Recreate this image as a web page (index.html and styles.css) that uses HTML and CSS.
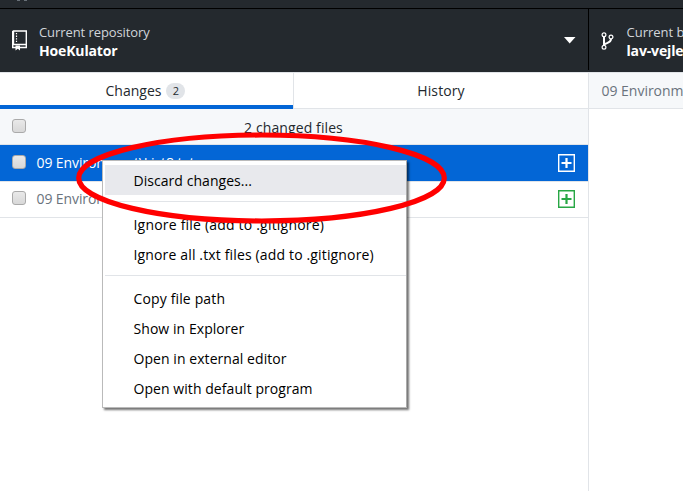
FILE: index.html
```html
<!DOCTYPE html>
<html lang="en">
<head>
<meta charset="utf-8">
<title>HoeKulator</title>
<link rel="stylesheet" href="styles.css">
</head>
<body>
<div class="titlebar"><i></i><i></i></div>
<header class="toolbar">
  <div class="repo">
    <svg class="repo-icon" width="16" height="21" viewBox="0 0 16 21"><path d="M.7 1h13.600v16.500H8M4 17.500H.7V1M.7 14.500h13.600" fill="none" stroke="#fff" stroke-width="1.400"/><path d="M1.500 1v13" stroke="#fff" stroke-width="1.400"/><path d="M4.500 3v9" stroke="#fff" stroke-width="1.200" stroke-dasharray="1.300 1.300"/><path d="M3.500 15.500h4.500v5l-2.200-1.800-2.300 1.800z" fill="#fff"/></svg>
    <div class="label"><span class="desc s-repo">Current repository</span><b>HoeKulator</b></div>
    <svg class="caret" width="12" height="7" viewBox="0 0 12 7"><path d="M0 0h11.500L5.700 6.500z" fill="#fff"/></svg>
  </div>
  <div class="branch">
    <svg class="branch-icon" width="14" height="18" viewBox="0 0 14 18"><g fill="none" stroke="#fff"><circle cx="3" cy="2.700" r="1.900" stroke-width="1.200"/><circle cx="10" cy="5" r="1.900" stroke-width="1.200"/><circle cx="3" cy="15.200" r="1.900" stroke-width="1.200"/><path d="M3 4.600v8.700M10 7c0 4-4 3.500-7 5.500" stroke-width="2"/></g></svg>
    <div class="label"><span class="desc">Current b</span><b>lav-vejle</b></div>
  </div>
</header>
<main>
  <section class="sidebar">
    <nav class="tabs">
      <div class="tab active"><span>Changes</span><span class="count">2</span></div>
      <div class="tab"><span class="s-history">History</span></div>
    </nav>
    <div class="row heading"><span class="check"></span><span class="total">2 changed files</span></div>
    <div class="row selected"><span class="check"></span><span class="file">09 Environment\List8.txt</span>
      <svg class="plus" width="17" height="18" viewBox="0 0 17 18"><path d="M.7.7h15.600v16.600H.7z" fill="none" stroke="currentColor" stroke-width="1.400"/><path d="M8.500 4v10M3.500 9h10" stroke="currentColor" stroke-width="2.200"/></svg></div>
    <div class="row last"><span class="check"></span><span class="file">09 Environment\test.txt</span>
      <svg class="plus" width="17" height="18" viewBox="0 0 17 18"><path d="M.7.7h15.600v16.600H.7z" fill="none" stroke="currentColor" stroke-width="1.400"/><path d="M8.500 4v10M3.500 9h10" stroke="currentColor" stroke-width="2.200"/></svg></div>
  </section>
  <section class="diff"><div class="path">09 Environm</div></section>
</main>
<div class="menu">
  <div class="item hover"><span class="m1">Discard changes...</span></div>
  <hr>
  <div class="item"><span class="m2">Ignore file (add to .gitignore)</span></div>
  <div class="item"><span class="m3">Ignore all .txt files (add to .gitignore)</span></div>
  <hr>
  <div class="item"><span class="m4">Copy file path</span></div>
  <div class="item"><span class="m5">Show in Explorer</span></div>
  <div class="item"><span class="m5">Open in external editor</span></div>
  <div class="item"><span class="m5">Open with default program</span></div>
</div>
<svg class="mark" width="372" height="94" viewBox="0 0 372 94"><ellipse cx="186.500" cy="47" rx="182.800" ry="43" fill="none" stroke="#f00" stroke-width="5.200"/></svg>
</body>
</html>
```

FILE: styles.css
```css
* { box-sizing: border-box; }
body { margin: 0; width: 683px; height: 491px; overflow: hidden; position: relative; background: #fff; color: #24292e; font: 14px/20px "Open Sans", "Noto Sans", sans-serif; white-space: nowrap; display: flex; flex-direction: column; }
.titlebar { height: 9px; background: #24292e; border-bottom: 1px solid #000; display: flex; gap: 4px; padding-left: 17px; flex: none; }
.titlebar i { width: 3px; height: 1px; background: #687078; }
.toolbar { height: 63px; background: #24292e; display: flex; flex: none; color: #fff; }
.repo { width: 589px; flex: none; display: flex; align-items: flex-start; border-right: 1px solid #000; padding: 14px 12px 0 12px; height: 61px; }
.repo-icon { margin-top: 7px; }
.label { display: flex; flex-direction: column; line-height: 18px; margin-left: 11px; }
.desc { color: #d1d5da; font-size: 13px; }
.s-repo { letter-spacing: -.08px; }
.label b { font-size: 14px; letter-spacing: -.15px; position: relative; top: 1px; }
.caret { margin: 14px 0 0 auto; }
.branch { flex: none; display: flex; padding: 14px 0 0 12px; }
.branch-icon { margin-top: 9px; }
.branch .label { margin-left: 11.500px; }
main { display: flex; flex: 1; }
.sidebar { width: 589px; flex: none; border-right: 1px solid #e1e4e8; }
.tabs { display: flex; height: 37px; border-top: 1px solid #e1e4e8; border-bottom: 1px solid #e1e4e8; }
.tab { flex: 1; display: flex; justify-content: center; align-items: center; }
.tab.active { flex: none; width: 294px; margin-bottom: -1px; border-right: 1px solid #e1e4e8; box-shadow: inset 0 -4px #0366d6; padding: 0 2px 1px 0; }
.s-history { letter-spacing: .1px; }
.count { width: 19px; height: 16px; margin-left: 5px; border-radius: 8px; background: #e1e4e8; font-size: 11px; line-height: 16px; text-align: center; }
.row { height: 36px; display: flex; align-items: center; border-bottom: 1px solid #e1e4e8; padding: 0 13px 0 12px; color: #6a737d; }
.heading { background: #f6f8fa; color: #24292e; }
.total { flex: 1; text-align: center; padding: 2px 14px 0 0; letter-spacing: .1px; }
.selected { height: 37px; background: #0366d6; background-clip: padding-box; color: #fff; }
.last { padding-bottom: 2px; }
.check { width: 14px; height: 14px; border: 1px solid #aaa; border-radius: 3px; background: linear-gradient(#e9e9e9, #d8d8d8); margin-bottom: 2px; flex: none; }
.last .check { margin-bottom: 1px; }
.file { margin-left: 10.500px; letter-spacing: -.1px; }
.last .file { padding-top: 1px; }
.plus { margin-left: auto; }
.last .plus { color: #28a745; }
.diff { flex: 1; overflow: hidden; }
.path { height: 37px; border: solid #e1e4e8; border-width: 1px 0; background: #f6f8fa; padding: 8px 0 0 12.500px; color: #6a737d; letter-spacing: -.02px; }
.menu { position: absolute; left: 102px; top: 160px; width: 305px; height: 248px; background: #fff; border: 1px solid #bababa; border-right-color: #aaa; box-shadow: 2px 2px 2px rgba(0,0,0,.55); padding: 4px 0 0 2px; color: #000; }
.item { height: 30px; padding: 6px 0 0 28.500px; }
.hover { background: #e8e9ed; }
.m1 { letter-spacing: .05px; }
.m2 { letter-spacing: .2px; }
.m3 { letter-spacing: .15px; }
.m4 { letter-spacing: .14px; }
.m5 { letter-spacing: .06px; }
hr { border: 0; border-top: 1px solid #e1e4e8; margin: 6px 0 7px; }
.mark { position: absolute; left: 75px; top: 131px; }
```
